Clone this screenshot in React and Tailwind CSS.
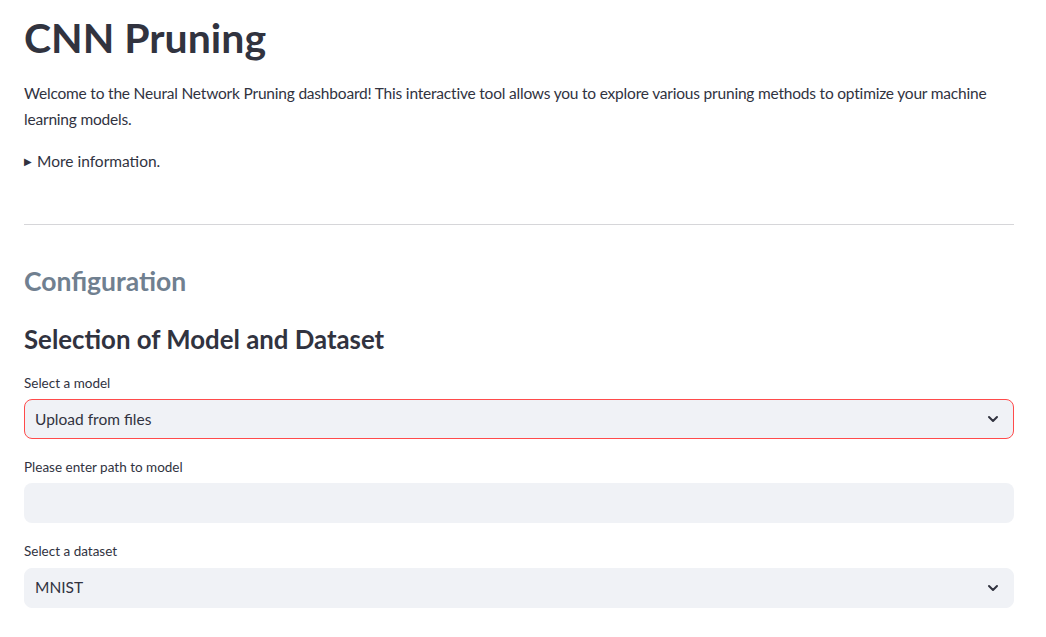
import React from 'react';

const ChevronDown = () => (
  <svg width="16" height="16" viewBox="0 0 24 24" fill="none" stroke="#31333F" strokeWidth="3" strokeLinecap="round" strokeLinejoin="round">
    <path d="M6 9l6 6 6-6" />
  </svg>
);

const Field = ({ label, children }) => (
  <div className="flex flex-col">
    <div className="h-5 text-[13.5px] leading-5 text-[#31333F] mb-[6.7px]">{label}</div>
    {children}
  </div>
);

const SelectBox = ({ value, active = false }) => (
  <div
    className={
      active
        ? 'h-10 flex items-center justify-between rounded-lg bg-[#f0f2f6] border border-[#ff4b4b] pl-[10px] pr-[12px]'
        : 'h-10 flex items-center justify-between rounded-lg bg-[#f0f2f6] border border-[#f0f2f6] pl-[10px] pr-[12px]'
    }
  >
    <span className="text-[15.5px] text-[#31333F]">{value}</span>
    <ChevronDown />
  </div>
);

export default function App() {
  return (
    <div className="min-h-screen bg-white font-['Lato',sans-serif] text-[#31333F]">
      <div className="w-[990px] ml-6 pt-[12.5px]">
        <h1 className="text-[41px] font-bold leading-[1.2] text-[#31333F]">CNN Pruning</h1>

        <p className="mt-[19.5px] text-[15.5px] leading-[25.6px] tracking-[-0.2px]">
          Welcome to the Neural Network Pruning dashboard! This interactive tool allows you to explore various pruning methods to optimize your machine learning models.
        </p>

        <div className="mt-[16.8px] flex items-center text-[15.5px] leading-[25.6px]">
          <span className="text-[10px] mr-[5px]">&#9654;</span>
          <span>More information.</span>
        </div>

        <div className="mt-[49px] h-px bg-[#d6d6d9]" />

        <h2 className="mt-[40.8px] text-[26.5px] font-bold leading-[1.2] text-[#708090]">Configuration</h2>

        <h3 className="mt-[26.6px] text-[25.8px] font-bold leading-[1.2] text-[#31333F]">Selection of Model and Dataset</h3>

        <div className="mt-[17.6px] flex flex-col gap-[17.6px]">
          <Field label="Select a model">
            <SelectBox value="Upload from files" active />
          </Field>
          <Field label="Please enter path to model">
            <div className="h-10 rounded-lg bg-[#f0f2f6]" />
          </Field>
          <Field label="Select a dataset">
            <SelectBox value="MNIST" />
          </Field>
        </div>
      </div>
    </div>
  );
}
